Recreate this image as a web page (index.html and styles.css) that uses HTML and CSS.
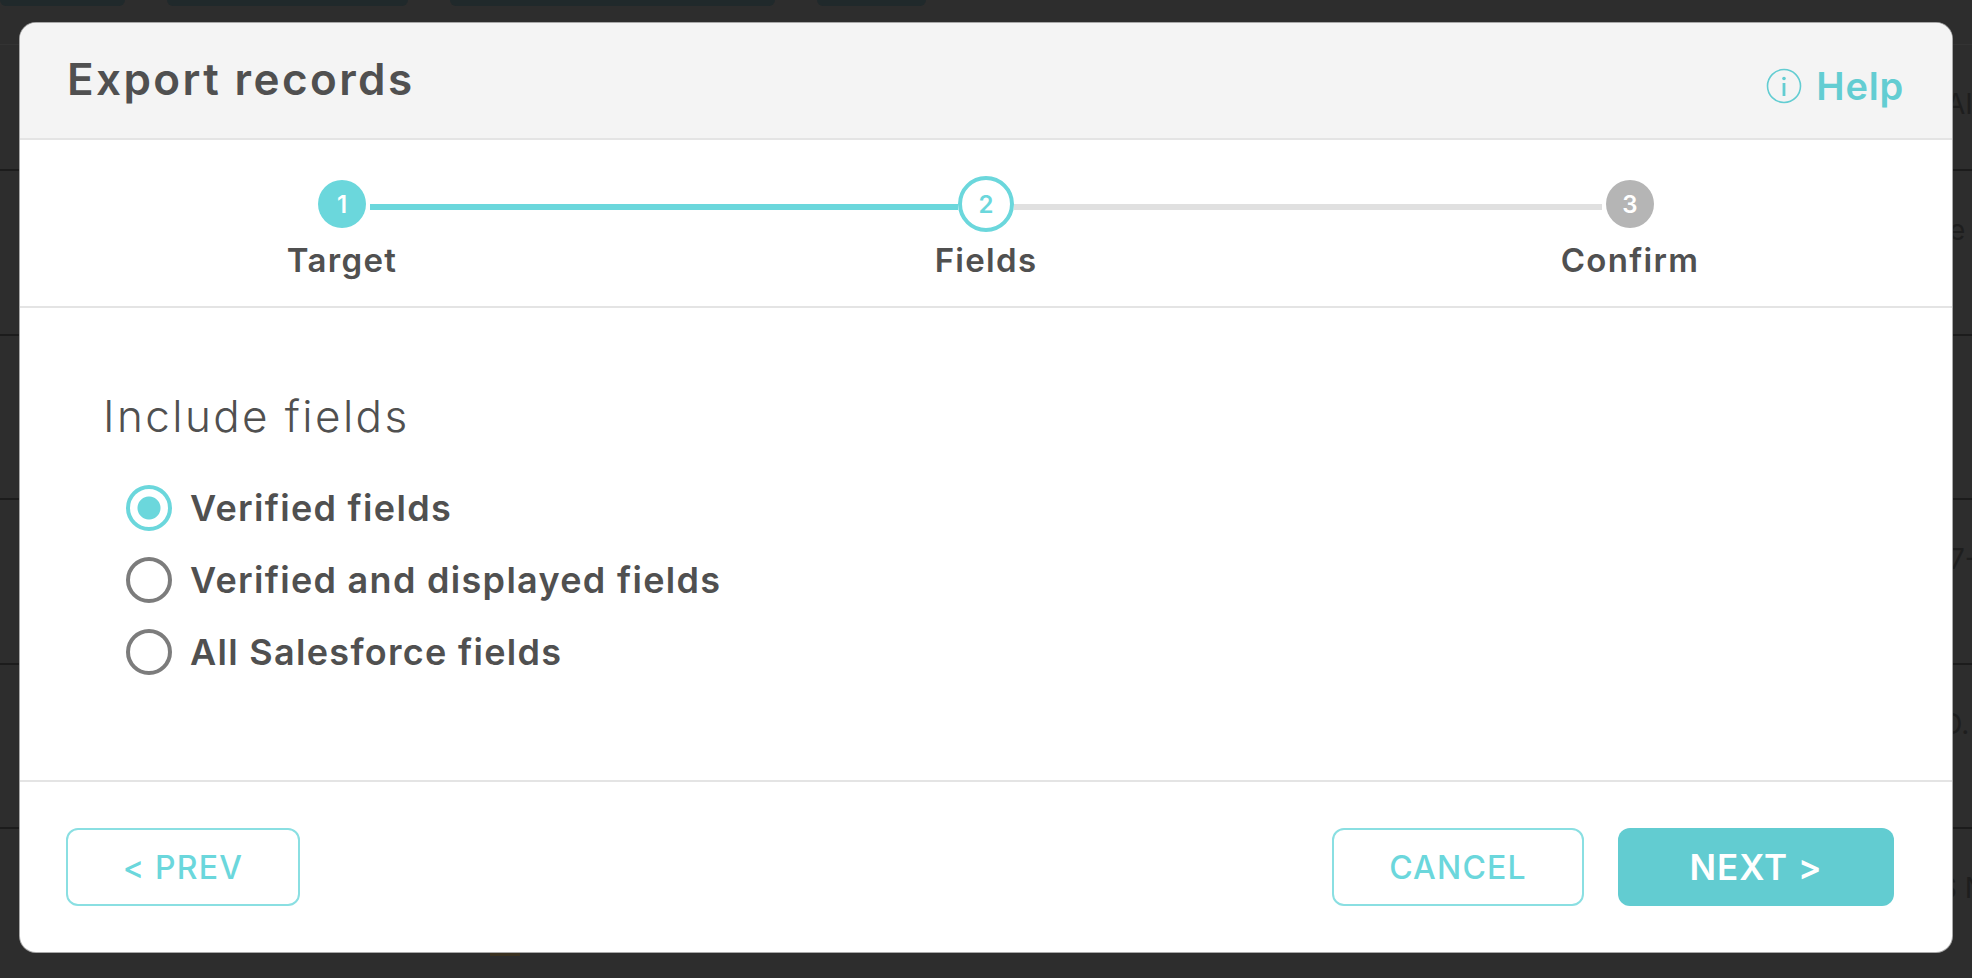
FILE: index.html
```html
<!DOCTYPE html>
<html lang="en">
<head>
    <meta charset="UTF-8">
    <meta name="viewport" content="width=device-width, initial-scale=1.0">
    <title>Export records</title>
    <link rel="stylesheet" href="styles.css">
</head>
<body>
    <!-- Page behind the dialog -->
    <div class="page">
        <div class="top-tabs">
            <span class="top-tab tab-a"></span>
            <span class="top-tab tab-b"></span>
            <span class="top-tab tab-c"></span>
            <span class="top-tab tab-d"></span>
        </div>
        <div class="table-head"><span class="cell cell-a">AI</span></div>
        <div class="table-row"><span class="cell cell-b">e</span></div>
        <div class="table-row"></div>
        <div class="table-row"><span class="cell cell-b">7-</span></div>
        <div class="table-row"><span class="cell cell-c">O.</span></div>
        <div class="table-row last"><span class="cell cell-d">S N</span></div>
        <div class="behind-note"><span class="note-icon"></span><span class="note-text">3 Connections</span></div>
    </div>

    <div class="modal">
        <div class="modal-header">
            <h1>Export records</h1>
            <a class="help" href="#">
                <svg class="help-icon" viewBox="0 0 36 36" fill="none" stroke="currentColor">
                    <ellipse cx="18" cy="18" rx="16.5" ry="16.5" stroke-width="1.6"/>
                    <circle cx="18" cy="10.5" r="1.8" fill="currentColor" stroke="none"/>
                    <path d="M18 15v13" stroke-width="2.8"/>
                </svg>
                Help
            </a>
        </div>

        <div class="steps">
            <div class="step done">
                <span class="step-num">1</span>
                <span class="step-label">Target</span>
            </div>
            <div class="step current">
                <span class="step-num">2</span>
                <span class="step-label">Fields</span>
            </div>
            <div class="step todo">
                <span class="step-num">3</span>
                <span class="step-label">Confirm</span>
            </div>
        </div>

        <div class="modal-body">
            <h2>Include fields</h2>
            <label class="radio-row"><input type="radio" name="fields" checked>Verified fields</label>
            <label class="radio-row"><input type="radio" name="fields">Verified and displayed fields</label>
            <label class="radio-row"><input type="radio" name="fields">All Salesforce fields</label>
        </div>

        <div class="modal-footer">
            <button class="btn btn-outline btn-prev">&lt; PREV</button>
            <button class="btn btn-outline btn-cancel">CANCEL</button>
            <button class="btn btn-next">NEXT &gt;</button>
        </div>
    </div>
</body>
</html>
```

FILE: styles.css
```css
* {
    box-sizing: border-box;
    margin: 0;
    padding: 0;
}

body {
    font-family: Inter, "Open Sans", Arial, sans-serif;
    background: #2d2d2d;
    color: #505050;
    height: 978px;
    overflow: hidden;
}

/* Page behind the dialog */
.page {
    height: 978px;
    overflow: hidden;
}

.top-tabs {
    display: flex;
    height: 45px;
    border-bottom: 1px solid #333;
}

.top-tab {
    height: 6px;
    background: #20292b;
    border-radius: 0 0 8px 8px;
    margin-right: 42px;
}

.tab-a { width: 125px; }
.tab-b { width: 241px; }
.tab-c { width: 325px; }
.tab-d { width: 109px; }

.table-head,
.table-row {
    border-bottom: 2px solid #1c1c1c;
    padding-top: 42px;
    white-space: nowrap;
    color: #1e1e1e;
    font-size: 28px;
    line-height: 34px;
}

.table-head { height: 126px; }
.table-row { height: 164.5px; }
.table-row.last { height: 123px; border-bottom: none; }

.cell { display: block; }
.cell-a { margin-left: 1946px; }
.cell-b { margin-left: 1949px; }
.cell-c { margin-left: 1941px; }
.cell-d { margin-left: 1939px; }

.behind-note {
    display: flex;
    gap: 13px;
    margin: -26px 0 0 490px;
    font-size: 28px;
    line-height: 34px;
    color: #1e1e1e;
}

.note-icon {
    width: 30px;
    height: 30px;
    background: #3a3120;
}

/* Dialog */
.modal {
    position: absolute;
    top: 23px;
    left: 20px;
    width: 1932px;
    height: 929px;
    background: white;
    border-radius: 16px;
    overflow: hidden;
    box-shadow: 0 0 0 1px #a8a8a8;
    display: flex;
    flex-direction: column;
}

.modal-header {
    height: 117px;
    background: #f4f4f4;
    border-bottom: 2px solid #e4e4e4;
    display: flex;
    justify-content: space-between;
    padding: 31px 48px 0 47px;
}

h1 {
    font-size: 44px;
    font-weight: 600;
    letter-spacing: 2.4px;
    line-height: 50px;
    color: #505050;
}

.help {
    display: flex;
    align-items: center;
    gap: 14px;
    height: 48px;
    margin-top: 8px;
    color: #63cdd2;
    font-size: 38px;
    font-weight: 600;
    letter-spacing: 0.8px;
    text-decoration: none;
}

.help-icon {
    width: 36px;
    height: 36px;
}

.steps {
    height: 168px;
    border-bottom: 2px solid #e4e4e4;
    display: grid;
    grid-template-columns: repeat(3, 644px);
}

.step {
    position: relative;
    display: flex;
    flex-direction: column;
    align-items: center;
    padding-top: 40px;
}

.step-num {
    width: 48px;
    height: 48px;
    margin: 0 0 14px;
    border-radius: 50%;
    display: flex;
    align-items: center;
    justify-content: center;
    font-size: 24px;
    font-weight: 600;
    color: white;
}

.step-label {
    font-size: 33px;
    font-weight: 600;
    letter-spacing: 1.3px;
    line-height: 36px;
    color: #505050;
}

.done .step-num { background: #6bd7dc; }
.todo .step-num { background: #b5b5b5; }

.current { padding-top: 36px; }

.current .step-num {
    width: 56px;
    height: 56px;
    margin-bottom: 10px;
    border: 4px solid #6bd7dc;
    color: #6bd7dc;
    background: white;
}

/* connector between two steps */
.done::after,
.current::after {
    content: "";
    position: absolute;
    top: 64px;
    left: calc(50% + 28px);
    width: 588px;
    height: 6px;
    background: #6bd7dc;
}

.current::after { background: #e0e0e0; }

.modal-body {
    flex: 1;
    padding: 83px 0 0 83px;
    border-bottom: 2px solid #e4e4e4;
}

h2 {
    font-size: 44px;
    font-weight: 300;
    letter-spacing: 2.4px;
    line-height: 50px;
    color: #505050;
    margin-bottom: 31px;
}

.radio-row {
    display: flex;
    align-items: center;
    gap: 18px;
    height: 72px;
    margin-left: 23px;
    font-size: 36px;
    font-weight: 600;
    letter-spacing: 1.3px;
    color: #505050;
}

input[type="radio"] {
    appearance: none;
    width: 46px;
    height: 46px;
    border-radius: 50%;
    border: 4px solid #7c7c7c;
    background: white;
    flex: none;
}

input[type="radio"]:checked {
    border-color: #6bd7dc;
    background: radial-gradient(circle, #6bd7dc 0 11px, white 12px);
}

.modal-footer {
    height: 170px;
    display: flex;
    padding: 46px 58px 0 46px;
}

.btn {
    height: 78px;
    border-radius: 12px;
    font-family: inherit;
    font-size: 32px;
    font-weight: 500;
    letter-spacing: 1.2px;
    cursor: pointer;
}

.btn-outline {
    background: white;
    border: 2px solid #8adfe2;
    color: #6bd7dc;
}

.btn-prev {
    width: 234px;
    margin-right: auto;
}

.btn-cancel {
    width: 252px;
    margin-right: 34px;
}

.btn-next {
    width: 276px;
    background: #62ccd1;
    border: none;
    color: white;
    font-size: 35px;
    font-weight: 600;
    letter-spacing: 1px;
}
```
